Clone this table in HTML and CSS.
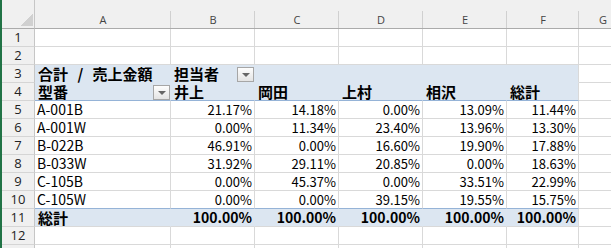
FILE: index.html
```html
<!DOCTYPE html>
<html lang="ja">
<head>
    <meta charset="UTF-8">
    <meta name="viewport" content="width=device-width, initial-scale=1.0">
    <title>売上金額ピボット</title>
    <link rel="stylesheet" href="styles.css">
</head>
<body>
    <div class="window">
        <div class="sheet">
            <!-- column headers -->
            <div class="corner"></div>
            <div class="col">A</div>
            <div class="col">B</div>
            <div class="col">C</div>
            <div class="col">D</div>
            <div class="col">E</div>
            <div class="col">F</div>
            <div class="col">G</div>

            <div class="row">1</div>
            <div class="cell"></div><div class="cell"></div><div class="cell"></div><div class="cell"></div><div class="cell"></div><div class="cell"></div><div class="cell"></div>

            <div class="row">2</div>
            <div class="cell"></div><div class="cell"></div><div class="cell"></div><div class="cell"></div><div class="cell"></div><div class="cell"></div><div class="cell"></div>

            <!-- pivot table: field header rows -->
            <div class="row">3</div>
            <div class="cell pv band jp title">合計 / 売上金額</div>
            <div class="cell pv band jp">担当者<span class="drop"></span></div>
            <div class="cell pv band"></div>
            <div class="cell pv band"></div>
            <div class="cell pv band"></div>
            <div class="cell pv band end"></div>
            <div class="cell"></div>

            <div class="row">4</div>
            <div class="cell pv head jp">型番<span class="drop"></span></div>
            <div class="cell pv head jp">井上</div>
            <div class="cell pv head jp">岡田</div>
            <div class="cell pv head jp">上村</div>
            <div class="cell pv head jp">相沢</div>
            <div class="cell pv head jp end">総計</div>
            <div class="cell"></div>

            <!-- pivot table: values -->
            <div class="row">5</div>
            <div class="cell">A-001B</div>
            <div class="cell num">21.17%</div>
            <div class="cell num">14.18%</div>
            <div class="cell num">0.00%</div>
            <div class="cell num">13.09%</div>
            <div class="cell num">11.44%</div>
            <div class="cell"></div>

            <div class="row">6</div>
            <div class="cell">A-001W</div>
            <div class="cell num">0.00%</div>
            <div class="cell num">11.34%</div>
            <div class="cell num">23.40%</div>
            <div class="cell num">13.96%</div>
            <div class="cell num">13.30%</div>
            <div class="cell"></div>

            <div class="row">7</div>
            <div class="cell">B-022B</div>
            <div class="cell num">46.91%</div>
            <div class="cell num">0.00%</div>
            <div class="cell num">16.60%</div>
            <div class="cell num">19.90%</div>
            <div class="cell num">17.88%</div>
            <div class="cell"></div>

            <div class="row">8</div>
            <div class="cell">B-033W</div>
            <div class="cell num">31.92%</div>
            <div class="cell num">29.11%</div>
            <div class="cell num">20.85%</div>
            <div class="cell num">0.00%</div>
            <div class="cell num">18.63%</div>
            <div class="cell"></div>

            <div class="row">9</div>
            <div class="cell">C-105B</div>
            <div class="cell num">0.00%</div>
            <div class="cell num">45.37%</div>
            <div class="cell num">0.00%</div>
            <div class="cell num">33.51%</div>
            <div class="cell num">22.99%</div>
            <div class="cell"></div>

            <div class="row">10</div>
            <div class="cell line">C-105W</div>
            <div class="cell num line">0.00%</div>
            <div class="cell num line">0.00%</div>
            <div class="cell num line">39.15%</div>
            <div class="cell num line">19.55%</div>
            <div class="cell num line">15.75%</div>
            <div class="cell"></div>

            <!-- grand total -->
            <div class="row">11</div>
            <div class="cell pv jp">総計</div>
            <div class="cell pv num bold">100.00%</div>
            <div class="cell pv num bold">100.00%</div>
            <div class="cell pv num bold">100.00%</div>
            <div class="cell pv num bold">100.00%</div>
            <div class="cell pv num bold end">100.00%</div>
            <div class="cell"></div>

            <div class="row">12</div>
            <div class="cell"></div><div class="cell"></div><div class="cell"></div><div class="cell"></div><div class="cell"></div><div class="cell"></div><div class="cell"></div>

            <!-- next row, only its top edge is in view -->
            <div class="row"></div>
            <div class="cell"></div><div class="cell"></div><div class="cell"></div><div class="cell"></div><div class="cell"></div><div class="cell"></div><div class="cell"></div>
        </div>
    </div>
</body>
</html>
```

FILE: styles.css
```css
* {
    margin: 0;
    padding: 0;
    box-sizing: border-box;
}

body {
    font-family: "Noto Sans CJK JP", "Noto Sans", sans-serif;
    background: #fff;
    overflow: hidden;
}

.window {
    border-left: 2px solid #217346;
    height: 248px;
    overflow: hidden;
}

.sheet {
    display: grid;
    grid-template-columns: 33px 136px 84px 84px 84px 84px 72px 48px;
    grid-template-rows: 29px;
    grid-auto-rows: 18px;
}

/* headers */
.corner {
    background: linear-gradient(to bottom right, transparent 50%, #d0d0d0 50%) no-repeat right 1px bottom 2px / 12px 12px, #f0f0f0;
    border-right: 1px solid #c6c6c6;
    border-bottom: 1px solid #ababab;
}

.col {
    display: flex;
    justify-content: center;
    align-items: flex-end;
    padding-bottom: 1px;
    font-family: "Open Sans", "Liberation Sans", sans-serif;
    font-size: 11px;
    line-height: 14px;
    color: #444;
    background: linear-gradient(#d0d0d0, #d0d0d0) no-repeat right bottom / 1px 17px, #f0f0f0;
    border-bottom: 1px solid #ababab;
}

.row {
    display: flex;
    justify-content: center;
    align-items: center;
    font-family: "Open Sans", "Liberation Sans", sans-serif;
    font-size: 13px;
    line-height: 17px;
    color: #222;
    background: #f0f0f0;
    border-right: 1px solid #c6c6c6;
    border-bottom: 1px solid #d5d5d5;
}

/* cells */
.cell {
    display: flex;
    align-items: center;
    padding: 0 2px;
    font-size: 14px;
    line-height: 17px;
    color: #000;
    white-space: nowrap;
    border-right: 1px solid #d9d9d9;
    border-bottom: 1px solid #d9d9d9;
}

.num {
    justify-content: flex-end;
    font-size: 13px;
}

.bold {
    font-size: 14px;
    font-weight: 700;
}

.jp {
    font-size: 15px;
    font-weight: 700;
    padding-left: 3px;
}

.title {
    word-spacing: 6px;
}

/* pivot styling */
.pv {
    background: #dce6f1;
    border-right-color: #dce6f1;
}

.pv.end {
    border-right-color: #d9d9d9;
}

.band {
    border-bottom-color: #dce6f1;
}

.head,
.line {
    border-bottom-color: #95b3d7;
}

.drop {
    margin-left: auto;
    margin-right: -2px;
    align-self: flex-end;
    width: 17px;
    height: 15px;
    border: 1px solid #a6a6a6;
    background: linear-gradient(#fdfdfd, #e4e4e4);
    display: flex;
    align-items: center;
    justify-content: center;
}

.drop::after {
    content: "";
    border-left: 4px solid transparent;
    border-right: 4px solid transparent;
    border-top: 4px solid #666;
}
```
